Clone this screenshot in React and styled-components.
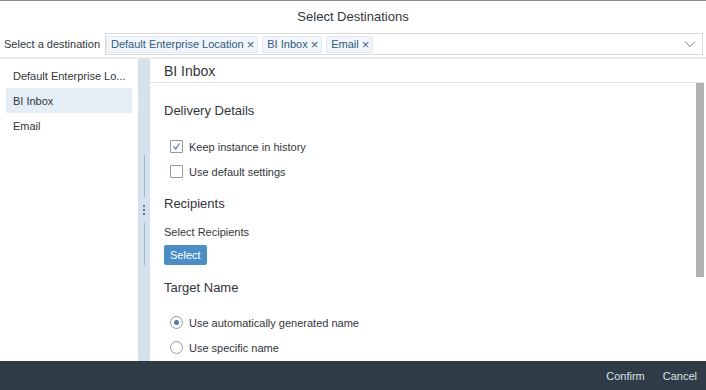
import React from "react";
import styled, { createGlobalStyle } from "styled-components";

const GlobalStyle = createGlobalStyle`
  html, body {
    margin: 0;
    padding: 0;
    background: #ffffff;
  }
  body {
    font-family: "Liberation Sans", Arial, sans-serif;
    color: #32363a;
  }
`;

const Dialog = styled.div`
  width: 706px;
  height: 390px;
  display: flex;
  flex-direction: column;
  box-sizing: border-box;
  border-top: 1px solid #8a8a8a;
  background: #fff;
  overflow: hidden;
`;

const Header = styled.div`
  height: 31px;
  display: flex;
  align-items: center;
  justify-content: center;
  font-size: 13px;
  color: #32363a;
`;

const DestRow = styled.div`
  height: 24px;
  display: flex;
  align-items: center;
  padding: 0 3px 1px 4px;
  border-bottom: 2px solid #ebebeb;
`;

const DestLabel = styled.span`
  font-size: 11px;
  color: #32363a;
  width: 101px;
  flex-shrink: 0;
`;

const TokenInput = styled.div`
  flex: 1;
  height: 20px;
  border: 1px solid #d9d9d9;
  display: flex;
  align-items: center;
  padding: 0 6px 0 0;
  gap: 4px;
`;

const Token = styled.span`
  height: 17px;
  box-sizing: border-box;
  display: inline-flex;
  align-items: center;
  gap: 3px;
  padding: 0 3px 0 4px;
  background: #f2f6fa;
  border: 1px solid #e1e8ef;
  color: #2f5a80;
  font-size: 11px;
  border-radius: 1px;
`;

const Close = styled.span`
  font-size: 13px;
  line-height: 1;
  color: #3d6488;
`;

const Chevron = styled.svg`
  margin-left: auto;
`;

const Body = styled.div`
  flex: 1;
  display: flex;
  min-height: 0;
`;

const Master = styled.div`
  width: 138px;
  padding: 4px 6px 0 6px;
  box-sizing: border-box;
  display: flex;
  flex-direction: column;
`;

const MasterItem = styled.div`
  height: 25px;
  display: flex;
  align-items: center;
  padding-left: 7px;
  font-size: 11px;
  color: #32363a;
  background: ${(p) => (p.selected ? "#e5eef7" : "transparent")};
  white-space: nowrap;
`;

const Splitter = styled.div`
  width: 12px;
  background: #d5e1ed;
  display: flex;
  flex-direction: column;
  align-items: center;
  padding: 96px 0;
  box-sizing: border-box;
`;

const SplitLine = styled.div`
  width: 1px;
  flex: 1;
  background: #9db6cf;
`;

const Grip = styled.div`
  display: flex;
  flex-direction: column;
  gap: 2px;
  padding: 8px 0;
`;

const Dot = styled.span`
  width: 2px;
  height: 2px;
  background: #5b7d9f;
`;

const Detail = styled.div`
  flex: 1;
  display: flex;
  flex-direction: column;
  min-width: 0;
`;

const DetailTitle = styled.div`
  height: 23px;
  display: flex;
  align-items: center;
  padding: 0 14px;
  font-size: 14px;
  border-bottom: 1px solid #e3e3e3;
  margin-right: 3px;
`;

const ScrollArea = styled.div`
  flex: 1;
  display: flex;
  min-height: 0;
`;

const Content = styled.div`
  flex: 1;
  padding: 15px 14px 0 14px;
  overflow: hidden;
`;

const Track = styled.div`
  width: 8px;
  margin-right: 2px;
  display: flex;
  flex-direction: column;
`;

const Thumb = styled.div`
  height: 194px;
  background: #b2b2b2;
`;

const SectionTitle = styled.div`
  font-size: 13px;
  height: 25px;
  display: flex;
  align-items: center;
  margin-top: ${(p) => p.top || 0}px;
  margin-bottom: ${(p) => p.gap || 0}px;
`;

const Option = styled.div`
  height: 25px;
  display: flex;
  align-items: center;
  gap: 6px;
  padding-left: 6px;
  font-size: 11px;
`;

const Box = styled.span`
  width: 11px;
  height: 11px;
  border: 1px solid #8c9aa8;
  border-radius: 1px;
  display: inline-flex;
  align-items: center;
  justify-content: center;
  background: #fff;
`;

const Radio = styled.span`
  width: 11px;
  height: 11px;
  border: 1px solid #8c9aa8;
  border-radius: 50%;
  display: inline-flex;
  align-items: center;
  justify-content: center;
  &::after {
    content: "";
    width: 5px;
    height: 5px;
    border-radius: 50%;
    background: ${(p) => (p.checked ? "#4f7da6" : "transparent")};
  }
`;

const FieldLabel = styled.div`
  font-size: 11px;
  margin-top: 10px;
  height: 14px;
`;

const Button = styled.button`
  display: block;
  margin-top: 5px;
  height: 20px;
  padding: 0 6px;
  border: none;
  border-radius: 2px;
  background: #4b8dc7;
  color: #fff;
  font-family: inherit;
  font-size: 11px;
`;

const Footer = styled.div`
  height: 29px;
  background: #2f3b47;
  display: flex;
  align-items: center;
  justify-content: flex-end;
  gap: 18px;
  padding-right: 9px;
`;

const FooterButton = styled.span`
  font-size: 11px;
  color: #d9e2ea;
`;

const tokens = ["Default Enterprise Location", "BI Inbox", "Email"];

export default function App() {
  return (
    <>
      <GlobalStyle />
      <Dialog>
        <Header>Select Destinations</Header>
        <DestRow>
          <DestLabel>Select a destination</DestLabel>
          <TokenInput>
            {tokens.map((t) => (
              <Token key={t}>
                {t}
                <Close>×</Close>
              </Token>
            ))}
            <Chevron width="12" height="8" viewBox="0 0 12 8">
              <path d="M1 1.5 L6 6.5 L11 1.5" fill="none" stroke="#6a7d90" strokeWidth="1" />
            </Chevron>
          </TokenInput>
        </DestRow>
        <Body>
          <Master>
            <MasterItem>Default Enterprise Lo...</MasterItem>
            <MasterItem selected>BI Inbox</MasterItem>
            <MasterItem>Email</MasterItem>
          </Master>
          <Splitter>
            <SplitLine />
            <Grip>
              <Dot />
              <Dot />
              <Dot />
            </Grip>
            <SplitLine />
          </Splitter>
          <Detail>
            <DetailTitle>BI Inbox</DetailTitle>
            <ScrollArea>
              <Content>
                <SectionTitle gap={11}>Delivery Details</SectionTitle>
                <Option>
                  <Box>
                    <svg width="9" height="9" viewBox="0 0 9 9">
                      <path d="M1.5 4.5 L3.7 7 L7.5 1.5" fill="none" stroke="#4f7da6" strokeWidth="1.2" />
                    </svg>
                  </Box>
                  Keep instance in history
                </Option>
                <Option>
                  <Box />
                  Use default settings
                </Option>
                <SectionTitle top={7}>Recipients</SectionTitle>
                <FieldLabel>Select Recipients</FieldLabel>
                <Button>Select</Button>
                <SectionTitle top={10} gap={10}>Target Name</SectionTitle>
                <Option>
                  <Radio checked />
                  Use automatically generated name
                </Option>
                <Option>
                  <Radio />
                  Use specific name
                </Option>
              </Content>
              <Track>
                <Thumb />
              </Track>
            </ScrollArea>
          </Detail>
        </Body>
        <Footer>
          <FooterButton>Confirm</FooterButton>
          <FooterButton>Cancel</FooterButton>
        </Footer>
      </Dialog>
    </>
  );
}
